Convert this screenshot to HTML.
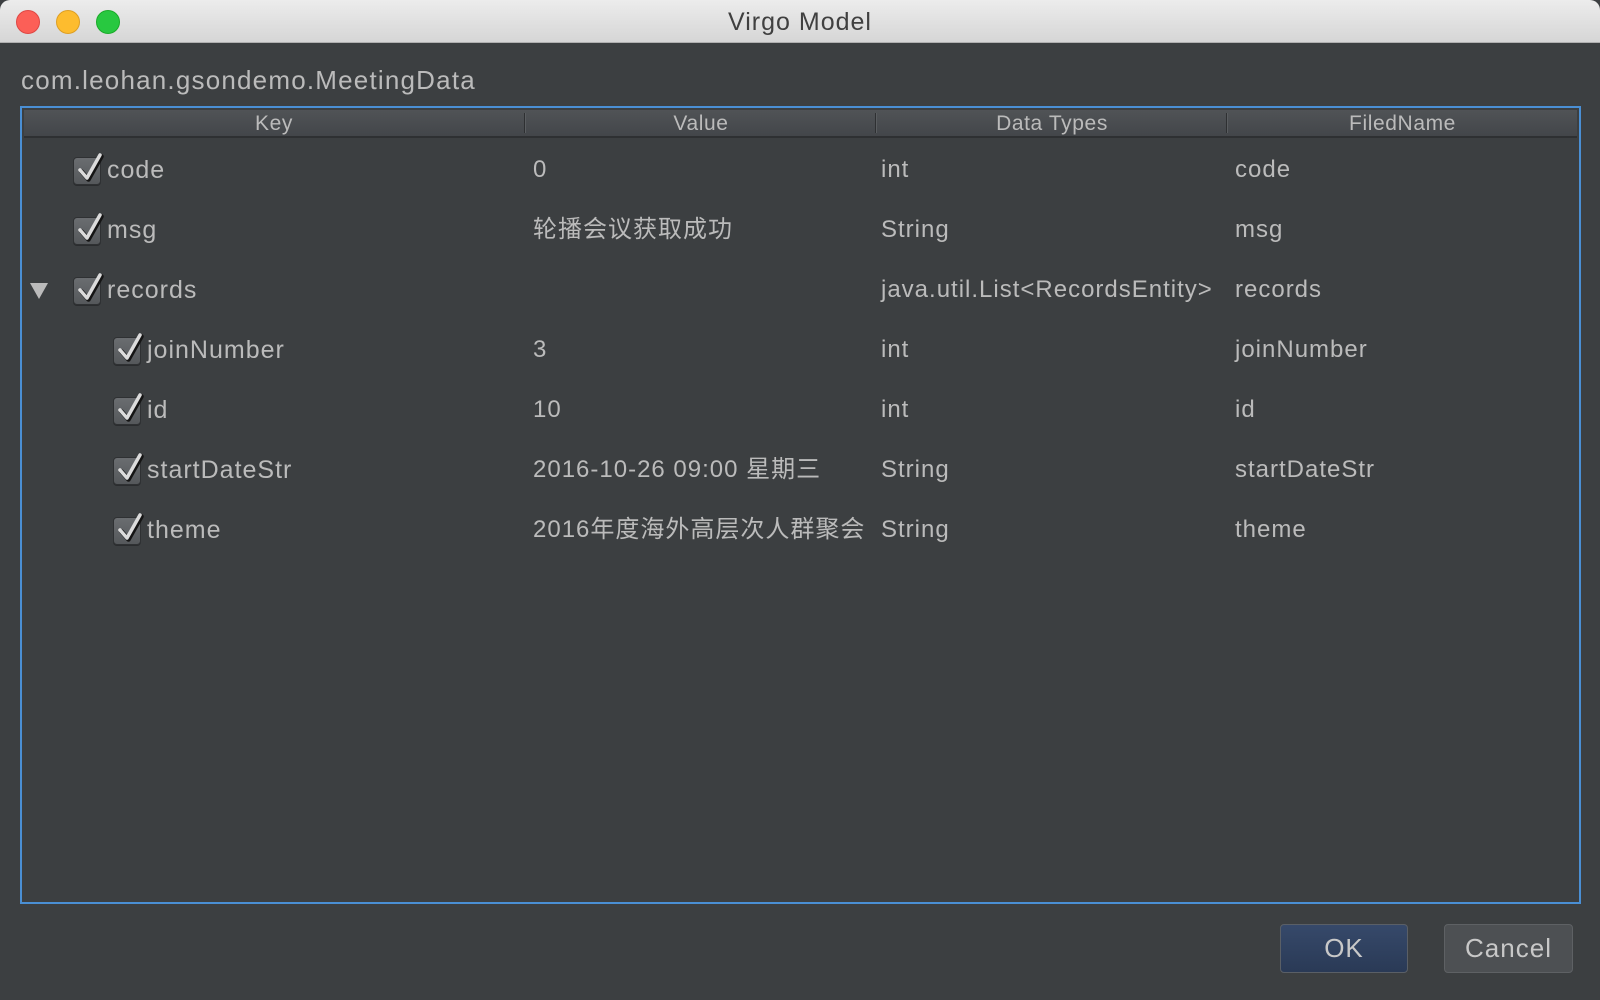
<!DOCTYPE html>
<html><head><meta charset="utf-8"><style>
*{margin:0;padding:0;box-sizing:border-box}
body{width:1600px;height:1000px;background:#3c3f41;font-family:"Liberation Sans","Noto Sans CJK SC",sans-serif;color:#bbbbbb;position:relative;overflow:hidden}
.tb{position:absolute;left:0;top:0;width:1600px;height:43px;background:linear-gradient(#ececec,#d6d6d6);border-bottom:1px solid #b0b0b0;border-radius:10px 10px 0 0}
.tl{position:absolute;top:10px;width:24px;height:24px;border-radius:50%}
.title{position:absolute;top:0;left:0;width:1600px;text-align:center;line-height:44px;font-size:25px;letter-spacing:1px;color:#404040}
.pkg{position:absolute;left:21px;top:65px;font-size:26px;letter-spacing:1.2px;color:#bbbbbb}
.tbl{position:absolute;left:20px;top:106px;width:1561px;height:798px;border:2px solid #4a8fd4}
.hdr{position:absolute;left:2px;top:2px;width:1553px;height:28px;background:linear-gradient(#505356,#43464a);border-bottom:2px solid #2e3032}
.h{position:absolute;top:0;height:26px;line-height:28px;text-align:center;font-size:21px;letter-spacing:0.6px;color:#bbbbbb}
.sep{position:absolute;top:3px;width:2px;height:20px;background:#2e3032;border-right:1px solid #5a5d60}
.c{position:absolute;font-size:24px;letter-spacing:1px;line-height:30px;white-space:nowrap}
.cb{position:absolute;width:28px;height:28px;border-radius:4px;background:linear-gradient(#6a6d70,#55585b);border:1px solid #2f3133;box-shadow:0 1px 0 #2a2c2e}
.cb svg{position:absolute;left:1px;top:-8px}
.tri{position:absolute;left:30px;width:0;height:0;border-left:9px solid transparent;border-right:9px solid transparent;border-top:16px solid #bbbbbb}
.btn{position:absolute;top:924px;height:49px;border-radius:4px;font-size:26px;letter-spacing:1px;line-height:47px;text-align:center}
</style></head><body>
<div class="tb"></div>
<div class="tl" style="left:16px;background:#fc5f57;border:1px solid #df4744"></div>
<div class="tl" style="left:56px;background:#fdbc2e;border:1px solid #de9f23"></div>
<div class="tl" style="left:96px;background:#28c840;border:1px solid #1aab29"></div>
<div class="title">Virgo Model</div>
<div class="pkg">com.leohan.gsondemo.MeetingData</div>
<div class="tbl">
 <div class="hdr">
  <div class="h" style="left:0;width:500px">Key</div>
  <div class="sep" style="left:500px"></div>
  <div class="h" style="left:502px;width:350px">Value</div>
  <div class="sep" style="left:851px"></div>
  <div class="h" style="left:853px;width:350px">Data Types</div>
  <div class="sep" style="left:1202px"></div>
  <div class="h" style="left:1204px;width:349px">FiledName</div>
 </div>
</div>
<div id="rows"></div>
<div class="btn" style="left:1280px;width:128px;background:linear-gradient(#36496a,#2a3a56);border:1px solid #5a5f66;color:#c8c8c8">OK</div>
<div class="btn" style="left:1444px;width:129px;background:#4d5053;border:1px solid #5e6164;color:#c8c8c8">Cancel</div>
<script>
var rows=[
[0,"code","0","int","code"],
[0,"msg","轮播会议获取成功","String","msg"],
[0,"records","","java.util.List<RecordsEntity>","records",1],
[1,"joinNumber","3","int","joinNumber"],
[1,"id","10","int","id"],
[1,"startDateStr","2016-10-26 09:00 星期三","String","startDateStr"],
[1,"theme","2016年度海外高层次人群聚会","String","theme"]];
var h="";
var chk='<svg width="30" height="32" viewBox="0 0 30 32"><path d="M5 20 L12 28 L25 5" fill="none" stroke="#151515" stroke-width="4.5" stroke-linecap="round" stroke-linejoin="round" transform="translate(1.5,1.5)"/><path d="M5 20 L12 28 L25 5" fill="none" stroke="#dcdcdc" stroke-width="3.5" stroke-linecap="round" stroke-linejoin="round"/></svg>';
function esc(s){return s.replace(/</g,"&lt;").replace(/>/g,"&gt;")}
rows.forEach(function(r,i){
 var cy=169+i*60;
 var bx=r[0]?113:73;
 h+='<div class="cb" style="left:'+bx+'px;top:'+(cy-12)+'px">'+chk+'</div>';
 if(r[5])h+='<div class="tri" style="top:'+(cy-6)+'px"></div>';
 h+='<div class="c" style="left:'+(bx+34)+'px;top:'+(cy-14)+'px;font-size:25px">'+r[1]+'</div>';
 h+='<div class="c" style="left:533px;top:'+(cy-14)+'px">'+esc(r[2])+'</div>';
 h+='<div class="c" style="left:881px;top:'+(cy-14)+'px">'+esc(r[3])+'</div>';
 h+='<div class="c" style="left:1235px;top:'+(cy-14)+'px">'+r[4]+'</div>';
});
document.getElementById("rows").innerHTML=h;
</script>
</body></html>
